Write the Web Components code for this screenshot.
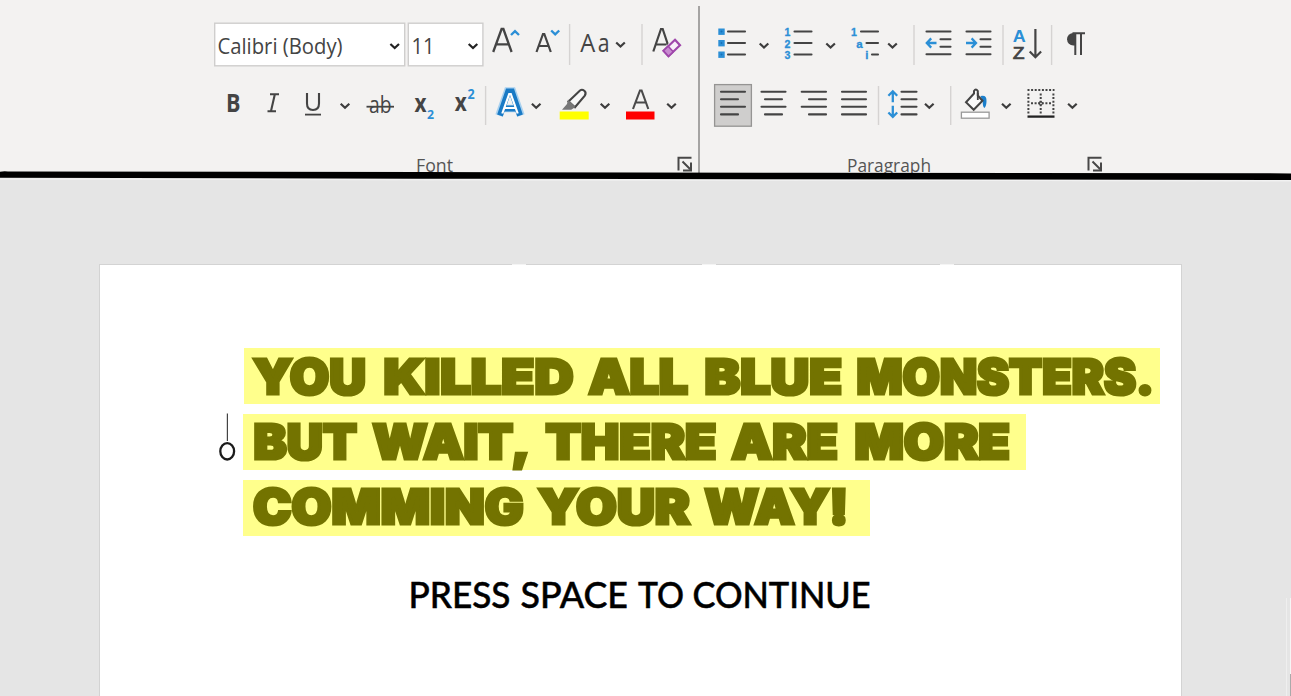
<!DOCTYPE html>
<html lang="en">
<head>
<meta charset="utf-8">
<title>Document</title>
<style>
html,body{margin:0;height:100%;overflow:hidden;background:#e5e5e5}
body{font-family:"Open Sans","Noto Sans",sans-serif}
</style>
</head>
<body>
<word-screen></word-screen>
<script>
const ink = '#444';
const blue = '#2b8fd6';
const line = (x1, y, x2, w = 2.1) => `<path d="M${x1} ${y}H${x2}" stroke="${ink}" stroke-width="${w}" stroke-linecap="round"/>`;
const chev = (x, y, c = '#3d3d3d') => `<path d="M${x - 4.3} ${y - 2}l4.3 4 4.3-4" stroke="${c}" stroke-width="2.2"/>`;
const rule = (x, y1, y2) => `<path d="M${x} ${y1}V${y2}" stroke="#d5d3d2" stroke-width="1.4"/>`;
const txt = (s, x, y, size, len, extra = '') => `<text x="${x}" y="${y}" font-size="${size}" fill="${ink}" ${len ? `textLength="${len}" lengthAdjust="spacingAndGlyphs"` : ''} ${extra}>${s}</text>`;

/* Each tool: left edge, width, drawing in ribbon coordinates */
const rows = {
  fontTop: { y: 20, h: 50, tools: [
    [214, 193, `<rect x="214.7" y="23.2" width="190" height="42.6" fill="#fff" stroke="#cfcecd" stroke-width="1.4"/>${txt('Calibri (Body)', 217.5, 53.9, 22.3, 125)}${chev(394.7, 46, '#222')}`],
    [407, 77, `<rect x="408.3" y="23.2" width="74.6" height="42.6" fill="#fff" stroke="#cfcecd" stroke-width="1.4"/>${txt('11', 411.5, 53.9, 22.3, 23)}${chev(473, 46, '#222')}`],
    [484, 38, `<path d="M493.2 52L501.6 29h1.8L511.6 52M496.5 44.3h12" stroke="${ink}" stroke-width="2.3"/><path d="M511 35l4-3.8 4 3.8" stroke="${blue}" stroke-width="2.4"/>`],
    [522, 44, `<path d="M536.5 52L543 34h1.3L550.8 52M539 46h9.5" stroke="${ink}" stroke-width="2.2"/><path d="M551.2 30.5l4 3.8 4-3.8" stroke="${blue}" stroke-width="2.4"/>`],
    [566, 8, rule(569.6, 24, 65)],
    [574, 62, `${txt('A', 580.3, 51.8, 25, 15)}${txt('a', 597.8, 51.8, 25, 11.8)}${chev(620.5, 44.5)}`],
    [636, 12, rule(642, 24, 65)],
    [648, 50, `<path d="M653.3 51.5L661 29h1.7L670.2 51.5M656.5 44.5h10" stroke="${ink}" stroke-width="2.2"/><path d="M674.7 37.8l7.6 7-10.9 13.6-8-7.2z" fill="#f3f2f1" stroke="#f3f2f1" stroke-width="2"/><path d="M675 39.8l5 5.5-11.5 11-5-5.5z" fill="#f8eef9" stroke="#9f47ab" stroke-width="2.2"/><path d="M668.2 46.2l5 5.6-4.7 4.5-5-5.5z" fill="#c88bd0" stroke="#9f47ab" stroke-width="1.6"/>`]
  ]},
  fontBottom: { y: 82, h: 48, tools: [
    [214, 42, txt('B', 226, 111.8, 24.5, 14.5, 'font-weight="700"')],
    [256, 36, `<path d="M270 94.2h9M267.5 111.2h8.5M274.8 94.5L271 111" stroke="${ink}" stroke-width="2.1"/>`],
    [292, 68, `<path d="M307 93v10.5q0 6.5 6 6.5t6-6.5V93" stroke="${ink}" stroke-width="2.1"/><path d="M305 114.6h16" stroke="${ink}" stroke-width="1.8"/>${chev(345, 105.7)}`],
    [360, 45, `${txt('ab', 369, 112.7, 24, 22.5)}<path d="M366.5 106.7H394" stroke="${ink}" stroke-width="1.8"/>`],
    [405, 38, `${txt('x', 414.5, 111.6, 25, 12, 'font-weight="700"')}<text x="427" y="118.7" font-size="13" font-weight="700" fill="${blue}" textLength="7" lengthAdjust="spacingAndGlyphs">2</text>`],
    [443, 38, `${txt('x', 454.8, 111.4, 25, 12, 'font-weight="700"')}<text x="467.5" y="99.3" font-size="13.5" font-weight="700" fill="${blue}" textLength="7.2" lengthAdjust="spacingAndGlyphs">2</text>`],
    [481, 10, rule(485.6, 86, 125)],
    [491, 62, `<path d="M499 115.5L507.6 91h4.8L521 115.5M504.5 108.5h11" stroke="#a9d1ef" stroke-width="7.6"/><path d="M500 115.5L508.2 91.5h3.6L520 115.5M504.5 108.5h11" stroke="#197ac5" stroke-width="6"/><path d="M502.3 113.5L509.2 94h1.6L517.7 113.5M505 108h10" stroke="#fff" stroke-width="2.2"/>${chev(536.2, 105.7)}`],
    [553, 66, `<rect x="559.7" y="111.5" width="29" height="8" fill="#ff0"/><path d="M568.5 101.5l11.5-11q2-1.7 4.3.3t.5 4.8l-9.8 11.6z" fill="#f8f8f8" stroke="${ink}" stroke-width="2.1"/><path d="M568 99.5l7.5 7.5-4.3 2.8H562l5-5.8z" fill="#777"/>${chev(605, 105.7)}`],
    [619, 79, `<rect x="626" y="111.5" width="28.5" height="8" fill="#f00"/><path d="M633 109L640 90.5h1.6L648.3 109M635.8 102.5h10" stroke="#4a4a4a" stroke-width="2.1"/>${chev(671.5, 105.7)}`]
  ]},
  paraTop: { y: 20, h: 50, tools: [
    [700, 76, `${[31.5, 43, 54.5].map(y => `<rect x="718.3" y="${y - 3}" width="6.4" height="6.4" fill="${blue}"/><path d="M720.5 ${y}h2M721.5 ${y - 1}v2" stroke="#176fb5" stroke-width=".8"/>${line(728, y, 745)}`).join('')}${chev(764, 45.5)}`],
    [776, 68, `${[31.5, 43, 54.5].map((y, i) => `<text x="784.6" y="${y + 4.6}" font-family="Liberation Sans" font-size="10.6" font-weight="700" fill="${blue}" stroke="${blue}" stroke-width=".3">${i + 1}</text>${line(794.5, y, 811.5)}`).join('')}${chev(830.6, 45.5)}`],
    [844, 62, `<g font-family="Liberation Sans" font-size="10.6" font-weight="700" fill="${blue}" stroke="${blue}" stroke-width=".3"><text x="851" y="36">1</text><text x="856.3" y="47.5" font-size="11.5">a</text><text x="865.3" y="59.2" font-size="11.5">i</text></g>${line(861, 31.5, 878)}${line(866.5, 43, 878)}${line(872, 54.5, 878)}${chev(892.5, 45.5)}`],
    [906, 14, rule(914, 25, 65)],
    [920, 40, `${line(926.5, 31.5, 950.5)}${line(940.5, 39.2, 950.5)}${line(940.5, 46.8, 950.5)}${line(926.5, 54.3, 950.5)}<path d="M936.5 43H927M931.2 38.4L926.8 43l4.4 4.6" stroke="${blue}" stroke-width="2.3"/>`],
    [960, 38, `${line(966.5, 31.5, 990.5)}${line(980.5, 39.2, 990.5)}${line(980.5, 46.8, 990.5)}${line(966.5, 54.3, 990.5)}<path d="M966 43H976M971.6 38.4L976 43l-4.4 4.6" stroke="${blue}" stroke-width="2.3"/>`],
    [998, 8, rule(1003, 25, 65)],
    [1006, 40, `<text x="1012.7" y="41.6" font-family="Liberation Sans" font-size="17" font-weight="700" fill="${blue}" textLength="13" lengthAdjust="spacingAndGlyphs">A</text>${txt('Z', 1012.7, 59, 17, 11.8, 'font-family="Liberation Sans" stroke="#444" stroke-width=".7"')}<path d="M1035.4 29V57M1029.7 51.5l5.7 5.8 5.7-5.8" stroke="${ink}" stroke-width="2.2"/>`],
    [1046, 10, rule(1051.6, 25, 65)],
    [1056, 50, `<path d="M1075.5 33V45.5h-2.2a6.2 6.2 0 0 1 0-12.5z" fill="${ink}"/><path d="M1072.5 33.3H1085M1075.3 33V55M1081 33V55" stroke="${ink}" stroke-width="2"/>`]
  ]},
  paraBottom: { y: 82, h: 48, tools: [
    [700, 56, `<rect x="714.6" y="84.6" width="36.8" height="41.6" fill="#cfcecd" stroke="#959493" stroke-width="1.3"/>${line(721, 91.8, 745)}${line(721, 99.3, 738)}${line(721, 106.8, 745)}${line(721, 114.4, 738)}`],
    [756, 40, `${line(761.5, 91.8, 785.5)}${line(765, 99.3, 782)}${line(761.5, 106.8, 785.5)}${line(765, 114.4, 782)}`],
    [796, 40, `${line(801.7, 91.8, 826)}${line(809, 99.3, 826)}${line(801.7, 106.8, 826)}${line(809, 114.4, 826)}`],
    [836, 38, `${line(842, 91.8, 866)}${line(842, 99.3, 866)}${line(842, 106.8, 866)}${line(842, 114.4, 866)}`],
    [874, 8, rule(878.5, 86, 125)],
    [882, 64, `<path d="M892.8 102.3V92.5M888.4 95.7l4.4-4.4 4.4 4.4M892.8 105.7v10.6M888.4 112.5l4.4 4.4 4.4-4.4" stroke="${blue}" stroke-width="2.3"/>${line(901.5, 91.8, 916.5)}${line(901.5, 99.3, 916.5)}${line(901.5, 106.8, 916.5)}${line(901.5, 114.4, 916.5)}${chev(929.3, 105.7)}`],
    [946, 10, rule(950.7, 86, 125)],
    [956, 64, `<rect x="961.4" y="112.2" width="27.7" height="6" fill="#fff" stroke="#999" stroke-width="1.3"/><path d="M980.5 96q6.3-1.5 6 5 0 5-2 7-1.8-1-1.8-6.500z" fill="#1b7fcb"/><path d="M974 93.500L966 102.2l7.700 7.600 8.800-9-4.700-5.300V91q-2-2.800-3.800 0z" fill="#fafafa" stroke="${ink}" stroke-width="2"/><path d="M977.800 93v7" stroke="${ink}" stroke-width="1.800"/>${chev(1006.3, 105.7)}`],
    [1020, 70, `<g stroke="${ink}" stroke-width="2" stroke-dasharray="2 1.600"><path d="M1027.500 90h27M1028.400 93.500V115M1040.700 93.500V115M1053.400 93.500V115M1031 103.300h21"/></g><circle cx="1040.700" cy="103.300" r="1.800" stroke="${ink}" stroke-width="1"/><path d="M1027.500 116.600h27" stroke="#222" stroke-width="2.300"/>${chev(1072.4, 105.7)}`]
  ]}
};

customElements.define('tool-row', class extends HTMLElement {
  connectedCallback() {
    const { y, h, tools } = rows[this.getAttribute('set')];
    this.attachShadow({ mode: 'open' }).innerHTML = `<style>
      :host{display:flex;height:${h}px;font-family:"Open Sans","Noto Sans",sans-serif}
      svg{display:block;flex:none;fill:none}
      </style>` + tools.map(([x, w, art]) => `<svg width="${w}" height="${h}" viewBox="${x} ${y} ${w} ${h}">${art}</svg>`).join('');
  }
});

customElements.define('ribbon-group', class extends HTMLElement {
  connectedCallback() {
    this.attachShadow({ mode: 'open' }).innerHTML = `<style>
      :host{display:flex;flex-direction:column;box-sizing:border-box;height:180px;padding-top:20px}
      slot[name=top]{display:block;height:50px;margin-bottom:12px}
      slot[name=bottom]{display:block;height:48px}
      footer{display:flex;height:30px;margin-top:24px;align-items:flex-start;padding-left:var(--label-x)}
      svg{display:block;fill:none;flex:none}
      </style><slot name="top"></slot><slot name="bottom"></slot>
      <footer><svg width="${this.getAttribute('gap')}" height="26"><text x="0" y="17.6" font-family="Open Sans" font-size="18.8" fill="#555" textLength="${this.getAttribute('len')}" lengthAdjust="spacingAndGlyphs">${this.getAttribute('label')}</text></svg>
      <svg width="18" height="22" viewBox="0 0 18 22"><path d="M1.500 16.500V3.700H14.500M5.500 7.500l7.500 7.500M14 8.500v8H6" stroke="#484848" stroke-width="2"/></svg></footer>`;
  }
});

customElements.define('ribbon-bar', class extends HTMLElement {
  connectedCallback() {
    this.attachShadow({ mode: 'open' }).innerHTML = `<style>
      :host{display:block;position:relative;height:176px;background:#f3f2f1}
      .groups{display:grid;grid-template-columns:698px 2px 1fr;height:176px;overflow:hidden}
      .font tool-row{margin-left:214px}
      .font{--label-x:416px}.para{--label-x:147px}
      i{width:1.4px;margin:6px 0 0 .4px;background:#a5a4a3}
      .edge{position:absolute;left:0;top:168px;display:block}
      </style>
      <div class="groups">
      <ribbon-group class="font" label="Font" len="37" gap="261"><tool-row slot="top" set="fontTop"></tool-row><tool-row slot="bottom" set="fontBottom"></tool-row></ribbon-group>
      <i></i>
      <ribbon-group class="para" label="Paragraph" len="84" gap="240"><tool-row slot="top" set="paraTop"></tool-row><tool-row slot="bottom" set="paraBottom"></tool-row></ribbon-group>
      </div>
      <svg class="edge" width="1291" height="16"><path d="M0 11L1291 12.7" stroke="#f2f2f2" stroke-width="1.5"/><path d="M0 3.7Q3 3 8 3.4L420 4 800 4.7 1291 5.4V12L800 11.3 420 10.7 0 9.8z" fill="#000"/></svg>`;
  }
});

/* A line of words, each with its own start and width */
customElements.define('lettered-line', class extends HTMLElement {
  connectedCallback() {
    const a = n => +this.getAttribute(n);
    const words = this.textContent.trim().split(' ');
    const spans = this.getAttribute('spans').split(' ').map(s => s.split('-').map(Number));
    this.attachShadow({ mode: 'open' }).innerHTML = `<style>
      :host{display:block;width:${a('w')}px;height:${a('h')}px}
      svg{display:block;overflow:visible}
      text{font:var(--face);fill:var(--ink);stroke:var(--ink);stroke-width:var(--bold);stroke-linejoin:miter}
      </style><svg width="${a('w')}" height="${a('h')}" viewBox="${a('x')} 0 ${a('w')} ${a('h')}">${words.map((w, i) =>
        `<text x="${spans[i][0]}" y="${a('base')}" textLength="${spans[i][1] - spans[i][0]}" lengthAdjust="spacingAndGlyphs">${w}</text>`).join('')}</svg>`;
  }
});

customElements.define('document-page', class extends HTMLElement {
  connectedCallback() {
    this.attachShadow({ mode: 'open' }).innerHTML = `<style>
      :host{display:block;box-sizing:border-box;background:#fff;border:1px solid #d3d3d3;border-bottom:0;height:432px;position:relative}
      .body{display:grid;grid-template-columns:25px 1fr;margin-left:118px;padding-top:83px}
      .pin{display:block;margin-top:65px;fill:none}
      .lines{display:flex;flex-direction:column;gap:10px;--face:900 48px Inter,Lato,sans-serif;--ink:#737300;--bold:3.2px}
      .lines lettered-line{background:#ffff8c}
      .lines lettered-line:first-child{margin-left:1px}
      .prompt{margin:34px 0 0 300px;--face:500 36px Lato,sans-serif;--ink:#000;--bold:.5px}
      .nick{position:absolute;top:-1px;width:14px;height:1px;background:#f4f4f4}
      </style>
      <span class="nick" style="left:412px"></span><span class="nick" style="left:602px"></span><span class="nick" style="left:840px"></span>
      <div class="body">
        <svg class="pin" width="25" height="52" viewBox="218 413 25 52"><path d="M227.4 413.5V441" stroke="#444" stroke-width="1.2"/><ellipse cx="227.2" cy="451.3" rx="6.9" ry="8.2" stroke="#1b1b1b" stroke-width="2.3"/></svg>
        <div class="lines">
          <lettered-line x="244" w="916" h="56" base="46" spans="253-366 383.5-573.5 588.5-688 704.5-842 856.5-1154">YOU KILLED ALL BLUE MONSTERS.</lettered-line>
          <lettered-line x="243" w="783" h="56" base="45" spans="253.5-357 372.5-530.5 545.5-716.5 731.5-838 854.5-1010">BUT WAIT, THERE ARE MORE</lettered-line>
          <lettered-line x="243" w="627" h="56" base="44" spans="253-523.5 538-690 704.5-848.5">COMMING YOUR WAY!</lettered-line>
        </div>
      </div>
      <lettered-line class="prompt" x="400" w="480" h="56" base="37.7" spans="408.5-510.5 520.5-628 638-684 692.5-870.5">PRESS SPACE TO CONTINUE</lettered-line>`;
  }
});

customElements.define('scroll-edge', class extends HTMLElement {
  connectedCallback() {
    this.attachShadow({ mode: 'open' }).innerHTML = `<style>
      :host{display:grid;grid-template-columns:1px 3px 1px;justify-content:end;height:98px;align-self:end}
      .a{background:#efefef}.b{display:flex;flex-direction:column;grid-column:3}
      .b span{flex:1;background:#f6f6f6}.b b{height:22px;background:#aaa}
      </style><div class="a"></div><div class="b"><span></span><b></b></div>`;
  }
});

customElements.define('word-screen', class extends HTMLElement {
  connectedCallback() {
    this.attachShadow({ mode: 'open' }).innerHTML = `<style>
      :host{display:block;width:1291px;height:696px;background:#e5e5e5;overflow:hidden}
      main{display:grid;grid-template-columns:99px 1083px 1fr;height:432px;padding-top:88px}
      document-page{grid-column:2}
      </style><ribbon-bar></ribbon-bar><main><document-page></document-page><scroll-edge></scroll-edge></main>`;
  }
});
</script>
</body>
</html>
